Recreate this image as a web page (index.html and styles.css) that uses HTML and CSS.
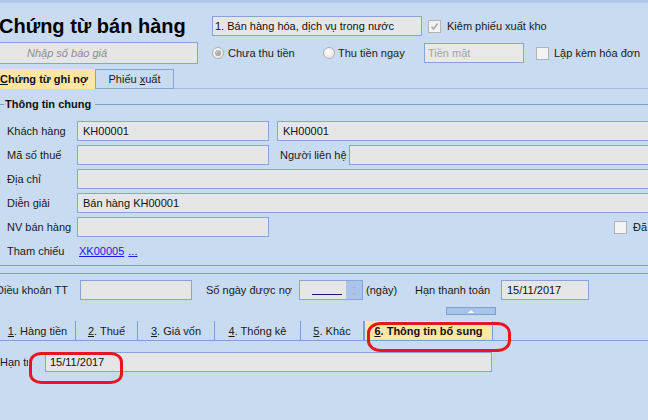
FILE: index.html
```html
<!DOCTYPE html>
<html>
<head>
<meta charset="utf-8">
<link rel="stylesheet" href="styles.css">
</head>
<body>
<div class="page">
  <div class="strip"></div>

  <div class="row1">
    <div class="title">Chứng từ bán hàng</div>
    <div class="field combo">1. Bán hàng hóa, dịch vụ trong nước</div>
    <span class="chk chk-on"><svg width="11" height="11" viewBox="0 0 11 11"><path d="M2.5 5.8 L4.5 8 L8.5 2.5" fill="none" stroke="#A9A9A9" stroke-width="1.6"/></svg></span>
    <span class="cap">Kiêm phiếu xuất kho</span>
  </div>

  <div class="row2">
    <div class="field quote">Nhập số báo giá</div>
    <span class="radio on"><span class="dot"></span></span>
    <span class="cap c1">Chưa thu tiền</span>
    <span class="radio"></span>
    <span class="cap c2">Thu tiền ngay</span>
    <div class="field cash">Tiền mặt</div>
    <span class="chk chk2"></span>
    <span class="cap c3">Lập kèm hóa đơn</span>
  </div>

  <div class="ttabs">
    <div class="ttab active"><span><u>C</u>hứng từ ghi nợ</span></div>
    <div class="ttab plain"><span>Phiếu <u>x</u>uất</span></div>
  </div>

  <div class="legend">
    <span class="ln short"></span>
    <span class="lg">Thông tin chung</span>
    <span class="ln"></span>
  </div>

  <div class="form">
    <div class="frow">
      <span class="lbl">Khách hàng</span>
      <div class="field w192">KH00001</div>
      <div class="field name">KH00001</div>
    </div>
    <div class="frow">
      <span class="lbl">Mã số thuế</span>
      <div class="field w192"></div>
      <span class="lbl2">Người liên hệ</span>
      <div class="field wide"></div>
    </div>
    <div class="frow">
      <span class="lbl">Địa chỉ</span>
      <div class="field wide"></div>
    </div>
    <div class="frow">
      <span class="lbl">Diễn giải</span>
      <div class="field wide">Bán hàng KH00001</div>
    </div>
    <div class="frow">
      <span class="lbl">NV bán hàng</span>
      <div class="field w192"></div>
      <span class="chk chk3"></span>
      <span class="cap">Đã</span>
    </div>
    <div class="frow">
      <span class="lbl">Tham chiếu</span>
      <a class="link" href="#">XK00005</a>
      <a class="link dots" href="#">...</a>
    </div>
  </div>

  <div class="sep"></div>

  <div class="terms">
    <span class="tl">Điều khoản TT</span>
    <div class="field tt"></div>
    <span class="tl2">Số ngày được nợ</span>
    <div class="field spin">
      <span class="uline"></span>
      <span class="spinbtn"><span class="up"></span><span class="down"></span></span>
    </div>
    <span class="tl3">(ngày)</span>
    <span class="tl4">Hạn thanh toán</span>
    <div class="field due">15/11/2017</div>
  </div>

  <div class="handle"><span class="tri"></span></div>

  <div class="btabs">
    <div class="btab b1"><span><u>1</u>. Hàng tiền</span></div>
    <div class="btab b2"><span><u>2</u>. Thuế</span></div>
    <div class="btab b3"><span><u>3</u>. Giá vốn</span></div>
    <div class="btab b4"><span><u>4</u>. Thống kê</span></div>
    <div class="btab b5"><span><u>5</u>. Khác</span></div>
    <div class="btab b6 active"><span><u>6</u>. Thông tin bổ sung</span></div>
  </div>

  <div class="extra">
    <span class="xl">Hạn trả</span>
    <div class="field xin">15/11/2017</div>
  </div>

  <div class="mark m1"></div>
  <div class="mark m2"></div>
</div>
</body>
</html>
```

FILE: styles.css
```css
html, body {
  margin: 0;
  padding: 0;
}
body {
  background: #C9DBF1;
  font-family: "Liberation Sans", Arial, sans-serif;
  font-size: 11px;
  color: #1a1a1a;
  overflow: hidden;
}
.page {
  position: relative;
  width: 648px;
  height: 420px;
  overflow: hidden;
}
.strip {
  height: 3px;
  background: #B1C8E9;
}
.field {
  box-sizing: border-box;
  height: 20px;
  border: 1px solid #86A5D3;
  background: #E6E6E6;
  display: flex;
  align-items: center;
  padding-left: 5px;
  white-space: nowrap;
  overflow: hidden;
  flex: none;
  color: #111;
}
.cap {
  white-space: nowrap;
  flex: none;
}

/* row 1 */
.row1 {
  display: flex;
  align-items: center;
  height: 20px;
  margin-top: 13px;
}
.title {
  width: 213px;
  margin-left: -1px;
  font-size: 20px;
  line-height: 20px;
  font-weight: bold;
  color: #000;
  white-space: nowrap;
  flex: none;
}
.combo {
  width: 210px;
  padding-left: 2px;
}
.chk {
  box-sizing: border-box;
  width: 13px;
  height: 13px;
  border: 1px solid #B3B3B3;
  background: #F3F3F3;
  display: inline-flex;
  align-items: center;
  justify-content: center;
  flex: none;
}
.chk-on {
  margin-left: 6px;
  margin-right: 6px;
}

/* row 2 */
.row2 {
  display: flex;
  align-items: center;
  height: 22px;
  margin-top: 6px;
}
.quote {
  width: 200px;
  height: 22px;
  margin-left: -2px;
  padding-left: 28px;
  font-style: italic;
  color: #8C8C8C;
}
.radio {
  box-sizing: border-box;
  width: 12px;
  height: 12px;
  border-radius: 50%;
  border: 1px solid #B0B0B0;
  background: radial-gradient(circle at 40% 35%, #FDFDFD, #E0E0E0);
  flex: none;
  display: inline-flex;
  align-items: center;
  justify-content: center;
}
.radio.on {
  margin-left: 14px;
}
.radio .dot {
  width: 6px;
  height: 6px;
  border-radius: 50%;
  background: radial-gradient(circle at 40% 35%, #C8C8C8, #8E8E8E);
}
.c1 {
  width: 95px;
  margin-left: 4px;
}
.c2 {
  width: 86px;
  margin-left: 3px;
}
.cash {
  width: 100px;
  padding-left: 3px;
  color: #A3A3A3;
  background: #E8E8E8;
}
.chk2 {
  margin-left: 12px;
}
.c3 {
  margin-left: 5px;
}

/* top tabs */
.ttabs {
  display: flex;
  margin-top: 5px;
  height: 20px;
  border-bottom: 1px solid #A6BDE0;
  box-sizing: border-box;
}
.ttab {
  box-sizing: border-box;
  height: 20px;
  display: flex;
  align-items: center;
  white-space: nowrap;
}
.ttab.active {
  width: 95px;
  background: #FFE6A3;
  font-weight: bold;
  color: #111;
}
.ttab.plain {
  width: 79px;
  border: 1px solid #86A5D3;
  justify-content: center;
}

/* legend */
.legend {
  display: flex;
  align-items: center;
  height: 12px;
  margin-top: 9px;
}
.ln {
  flex: 1;
  height: 1px;
  background: #7E9FD1;
}
.ln.short {
  flex: none;
  width: 4px;
}
.lg {
  font-weight: bold;
  padding: 0 4px 0 1px;
  white-space: nowrap;
  color: #111;
}

/* form */
.form {
  margin-top: 11px;
  width: 700px;
}
.frow {
  display: flex;
  align-items: center;
  height: 20px;
  margin-bottom: 4px;
}
.lbl {
  width: 77px;
  padding-left: 7px;
  box-sizing: border-box;
  white-space: nowrap;
  flex: none;
}
.w192 {
  width: 192px;
}
.name {
  width: 400px;
  margin-left: 8px;
}
.lbl2 {
  margin-left: 11px;
  width: 69px;
  white-space: nowrap;
  flex: none;
}
.wide {
  width: 600px;
}
.chk3 {
  margin-left: 345px;
  margin-right: 6px;
}
.link {
  color: #1A1AE6;
  text-decoration: underline;
  margin-left: 2px;
}
.link.dots {
  margin-left: 4px;
}

/* separator */
.sep {
  margin-top: 4px;
  height: 7px;
  border-top: 1px solid #7E9FD1;
  border-bottom: 1px solid #7E9FD1;
}

/* terms row */
.terms {
  display: flex;
  align-items: center;
  height: 20px;
  margin-top: 6px;
}
.tl {
  width: 84px;
  margin-left: -4px;
  white-space: nowrap;
  flex: none;
}
.tt {
  width: 112px;
}
.tl2 {
  margin-left: 14px;
  width: 93px;
  white-space: nowrap;
  flex: none;
}
.spin {
  width: 64px;
  padding: 0;
  position: relative;
  justify-content: space-between;
}
.uline {
  width: 30px;
  height: 1px;
  background: #1C1C5A;
  margin-left: 12px;
  margin-top: 9px;
}
.spinbtn {
  width: 16px;
  height: 18px;
  background: #AAC5EC;
  display: flex;
  flex-direction: column;
  align-items: center;
  justify-content: space-around;
  padding: 2px 0;
  box-sizing: border-box;
}
.up, .down {
  width: 0;
  height: 0;
  border-left: 2px solid transparent;
  border-right: 2px solid transparent;
}
.up {
  border-bottom: 2px solid #C9A7B8;
}
.down {
  border-top: 2px solid #C9A7B8;
}
.tl3 {
  margin-left: 3px;
  width: 49px;
  white-space: nowrap;
  flex: none;
}
.tl4 {
  width: 86px;
  white-space: nowrap;
  flex: none;
}
.due {
  width: 88px;
}

/* handle */
.handle {
  margin-top: 7px;
  margin-left: 446px;
  width: 50px;
  height: 8px;
  box-sizing: border-box;
  background: #A9C4EB;
  border: 1px solid #7E9FD1;
  display: flex;
  align-items: center;
  justify-content: center;
}
.tri {
  width: 0;
  height: 0;
  border-left: 3px solid transparent;
  border-right: 3px solid transparent;
  border-bottom: 3px solid #FFFFFF;
}

/* bottom tabs */
.btabs {
  display: flex;
  margin-top: 6px;
  height: 20px;
  box-sizing: border-box;
  border-bottom: 1px solid #7E9FD1;
}
.btab {
  box-sizing: border-box;
  height: 19px;
  border-right: 1px solid #7E9FD1;
  display: flex;
  align-items: center;
  justify-content: center;
  white-space: nowrap;
  flex: none;
}
.b1 { width: 76px; }
.b2 { width: 62px; }
.b3 { width: 77px; }
.b4 { width: 86px; }
.b5 { width: 63px; }
.b6 {
  width: 129px;
  background: #FFE6A3;
  font-weight: bold;
  color: #111;
  border-left: 1px solid #7E9FD1;
}

/* extra row */
.extra {
  display: flex;
  align-items: center;
  height: 20px;
  margin-top: 11px;
}
.xl {
  width: 28px;
  overflow: hidden;
  white-space: nowrap;
  flex: none;
}
.xin {
  width: 447px;
  margin-left: 17px;
  padding-left: 4px;
}

/* annotations */
.mark {
  position: absolute;
  box-sizing: border-box;
  border: 3px solid #E8141E;
}
.m1 {
  left: 367px;
  top: 322px;
  width: 144px;
  height: 30px;
  border-radius: 14px / 11px;
}
.m2 {
  left: 29px;
  top: 352px;
  width: 94px;
  height: 32px;
  border-radius: 12px / 10px;
}
```
